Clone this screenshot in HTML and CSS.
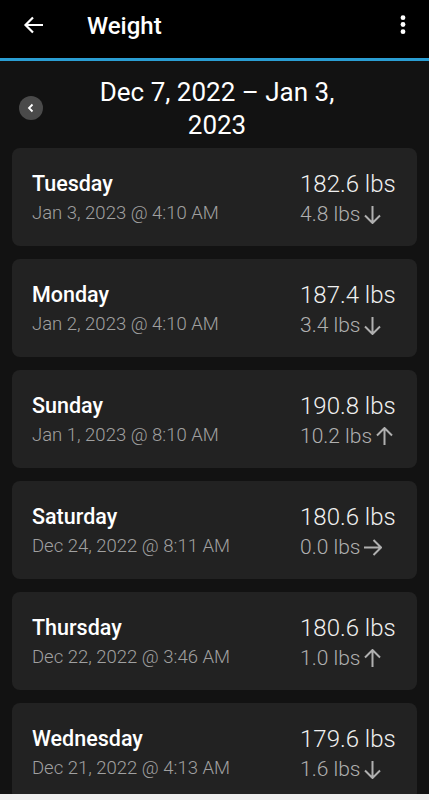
FILE: index.html
```html
<!DOCTYPE html>
<html lang="en">
<head>
    <meta charset="UTF-8">
    <meta name="viewport" content="width=device-width, initial-scale=1.0">
    <title>Weight</title>
    <link rel="stylesheet" href="styles.css">
</head>
<body>
    <div id="wrapper">
        <div class="topbar">
            <svg class="back" width="22" height="22" viewBox="0 0 22 22"><path d="M20 11H3M10 3.5L2.5 11L10 18.5" fill="none" stroke="#fff" stroke-width="2.2"/></svg>
            <div class="title">Weight</div>
            <svg class="kebab" width="8" height="24" viewBox="0 0 8 24"><circle cx="4" cy="4.7" r="2.4" fill="#fff"/><circle cx="4" cy="11.5" r="2.4" fill="#fff"/><circle cx="4" cy="18.7" r="2.4" fill="#fff"/></svg>
        </div>
        <div class="range">
            <div class="prev"><svg width="10" height="10" viewBox="0 0 10 10"><path d="M6.5 1.5L3 5l3.5 3.5" fill="none" stroke="#fff" stroke-width="1.8"/></svg></div>
            <div class="range-text">Dec 7, 2022 – Jan 3,<br>2023</div>
        </div>
        <div class="list">
            <div class="card">
                <div class="left"><div class="day">Tuesday</div><div class="date">Jan 3, 2023 @ 4:10 AM</div></div>
                <div class="right"><div class="weight">182.6 lbs</div><div class="delta">4.8 lbs<svg class="arr" width="19" height="19" viewBox="0 0 19 19"><path d="M9.5 1v17M2 10.5l7.5 7.5 7.5-7.5" fill="none" stroke="#b0b0b0" stroke-width="2"/></svg></div></div>
            </div>
            <div class="card">
                <div class="left"><div class="day">Monday</div><div class="date">Jan 2, 2023 @ 4:10 AM</div></div>
                <div class="right"><div class="weight">187.4 lbs</div><div class="delta">3.4 lbs<svg class="arr" width="19" height="19" viewBox="0 0 19 19"><path d="M9.5 1v17M2 10.5l7.5 7.5 7.5-7.5" fill="none" stroke="#b0b0b0" stroke-width="2"/></svg></div></div>
            </div>
            <div class="card">
                <div class="left"><div class="day">Sunday</div><div class="date">Jan 1, 2023 @ 8:10 AM</div></div>
                <div class="right"><div class="weight">190.8 lbs</div><div class="delta">10.2 lbs<svg class="arr" width="19" height="19" viewBox="0 0 19 19"><path d="M9.5 18V1M2 8.5L9.5 1l7.5 7.5" fill="none" stroke="#b0b0b0" stroke-width="2"/></svg></div></div>
            </div>
            <div class="card">
                <div class="left"><div class="day">Saturday</div><div class="date">Dec 24, 2022 @ 8:11 AM</div></div>
                <div class="right"><div class="weight">180.6 lbs</div><div class="delta">0.0 lbs<svg class="arr" width="19" height="19" viewBox="0 0 19 19"><path d="M1 9.5h17M10.5 2l7.5 7.5-7.5 7.5" fill="none" stroke="#b0b0b0" stroke-width="2"/></svg></div></div>
            </div>
            <div class="card">
                <div class="left"><div class="day">Thursday</div><div class="date">Dec 22, 2022 @ 3:46 AM</div></div>
                <div class="right"><div class="weight">180.6 lbs</div><div class="delta">1.0 lbs<svg class="arr" width="19" height="19" viewBox="0 0 19 19"><path d="M9.5 18V1M2 8.5L9.5 1l7.5 7.5" fill="none" stroke="#b0b0b0" stroke-width="2"/></svg></div></div>
            </div>
            <div class="card">
                <div class="left"><div class="day">Wednesday</div><div class="date">Dec 21, 2022 @ 4:13 AM</div></div>
                <div class="right"><div class="weight">179.6 lbs</div><div class="delta">1.6 lbs<svg class="arr" width="19" height="19" viewBox="0 0 19 19"><path d="M9.5 1v17M2 10.5l7.5 7.5 7.5-7.5" fill="none" stroke="#b0b0b0" stroke-width="2"/></svg></div></div>
            </div>
        </div>
        <div class="navbar"></div>
    </div>
</body>
</html>
```
FILE: styles.css
```css
body{
    margin: 0;
    background: #121212;
    font-family: Roboto, "Liberation Sans", sans-serif;
    color: #fff;
}
#wrapper{
    width: 429px;
    height: 800px;
    overflow: hidden;
    position: relative;
    background: #121212;
}
.topbar{
    height: 58px;
    background: #000;
    border-bottom: 3px solid #2a9ed3;
    display: flex;
    align-items: center;
    padding: 0 22px 0 23px;
}
.back{
    margin-top: -8px;
}
.title{
    flex: 1;
    font-size: 24px;
    font-weight: 500;
    margin-left: 42px;
    margin-top: -6px;
}
.kebab{
    margin-top: -8px;
}
.range{
    display: flex;
    align-items: center;
    height: 87px;
    padding-left: 19px;
}
.prev{
    width: 24px;
    height: 24px;
    border-radius: 50%;
    background: #4a4a4a;
    display: flex;
    align-items: center;
    justify-content: center;
    margin-top: 6px;
}
.range-text{
    flex: 1;
    text-align: center;
    font-size: 26px;
    line-height: 33px;
    margin-right: 38px;
    margin-top: 9px;
}
.list{
    padding: 0 12px;
}
.card{
    height: 98px;
    background: #222;
    border-radius: 8px;
    margin-bottom: 13px;
    display: flex;
    justify-content: space-between;
    align-items: center;
    padding: 0 20px;
}
.day{
    font-size: 21.5px;
    font-weight: 500;
    margin-bottom: 6px;
}
.date{
    font-size: 18.5px;
    font-weight: 300;
    color: #a0a0a0;
}
.right{
    width: 97px;
    white-space: nowrap;
    padding-top: 2px;
}
.weight{
    font-size: 24px;
    font-weight: 300;
    color: #f0f0f0;
    margin-bottom: 4px;
}
.delta{
    font-size: 21px;
    font-weight: 300;
    color: #b0b0b0;
    display: flex;
    align-items: center;
}
.arr{
    margin-left: 3px;
}
.navbar{
    position: absolute;
    left: 0;
    bottom: 0;
    width: 100%;
    height: 6px;
    background: #f0f0f0;
}
```
